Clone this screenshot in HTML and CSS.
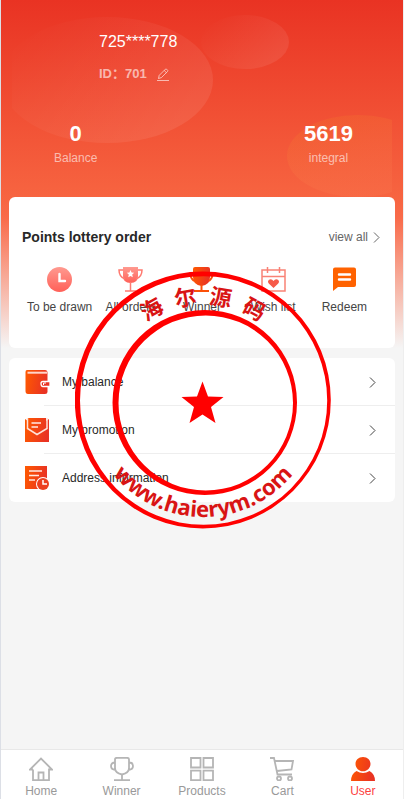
FILE: index.html
```html
<!DOCTYPE html>
<html lang="en">
<head>
    <meta charset="UTF-8">
    <meta name="viewport" content="width=device-width, initial-scale=1.0">
    <title>User</title>
    <link rel="stylesheet" href="styles.css">
</head>
<body>
    <!-- Shared gradients for the icons -->
    <svg class="defs" width="0" height="0" aria-hidden="true">
        <defs>
            <linearGradient id="orange" x1="0" y1="0" x2="1" y2="0.2">
                <stop offset="0" stop-color="#ff5a00"/>
                <stop offset="1" stop-color="#e93323"/>
            </linearGradient>
            <linearGradient id="pink" x1="0" y1="0" x2="0" y2="1">
                <stop offset="0" stop-color="#ff9a90"/>
                <stop offset="1" stop-color="#ff6058"/>
            </linearGradient>
        </defs>
    </svg>

    <div class="page">
        <main class="content">
            <header class="header">
                <svg class="bubbles" viewBox="12 0 380 200" preserveAspectRatio="none" aria-hidden="true">
                    <defs>
                        <linearGradient id="glow" x1="0" y1="0" x2="1" y2="0.5">
                            <stop offset="0.1" stop-color="#fff" stop-opacity="0"/>
                            <stop offset="1" stop-color="#fff" stop-opacity="0.08"/>
                        </linearGradient>
                        <linearGradient id="amber" x1="0" y1="0" x2="0.5" y2="1">
                            <stop offset="0" stop-color="#f07020" stop-opacity="0.3"/>
                            <stop offset="1" stop-color="#ff9060" stop-opacity="0.12"/>
                        </linearGradient>
                    </defs>
                    <ellipse cx="107" cy="80" rx="106" ry="63" fill="url(#glow)"/>
                    <ellipse cx="245" cy="42" rx="44" ry="27" fill="url(#glow)"/>
                    <ellipse cx="358" cy="156" rx="71" ry="41" fill="url(#amber)"/>
                </svg>
                <div class="profile">
                    <h1>725****778</h1>
                    <div class="user-id">
                        <span>ID：701</span>
                        <button type="button" aria-label="Edit profile">
                            <svg width="12" height="13" viewBox="0 0 12 13" fill="none" stroke="currentColor">
                                <path d="M1.5 10.5L2.2 7.4L8.4 1.2Q9 .6 9.6 1.2L10.6 2.2Q11.2 2.8 10.6 3.4L4.4 9.6ZM7.2 2.5L9.4 4.7M0 12.5H12"/>
                            </svg>
                        </button>
                    </div>
                </div>
                <div class="totals">
                    <div class="total"><strong>0</strong><span>Balance</span></div>
                    <div class="total"><strong>5619</strong><span>integral</span></div>
                </div>
            </header>

            <section class="card orders">
                <div class="card-head">
                    <h2>Points lottery order</h2>
                    <a href="#all">view all
                        <svg width="7" height="11" viewBox="0 0 7 11" fill="none" stroke="currentColor"><path d="M1 .5L6 5.5L1 10.5"/></svg>
                    </a>
                </div>
                <nav class="order-links">
                    <a href="#drawn">
                        <svg width="25" height="25" viewBox="0 0 25 25"><circle cx="12.5" cy="12.5" r="12.5" fill="url(#pink)"/><path d="M12.5 7V14H18" fill="none" stroke="#fff" stroke-width="2.4" stroke-linecap="round"/></svg>
                        <span>To be drawn</span>
                    </a>
                    <a href="#orders">
                        <svg width="25" height="25" viewBox="0 0 25 25"><path d="M5 0H20V9Q20 16 12.5 16T5 9Z" fill="url(#pink)"/><path d="M5 3H1Q1 10 7 12M20 3H24Q24 10 18 12M12.5 15V24M7 24H18" fill="none" stroke="#ff7a70" stroke-width="1.5"/><path d="M12.5 3L13.6 5.5L16.2 5.8L14.2 7.6L14.8 10.2L12.5 8.9L10.2 10.2L10.8 7.6L8.8 5.8L11.4 5.5Z" fill="#fff"/></svg>
                        <span>All orders</span>
                    </a>
                    <a href="#winner">
                        <svg width="25" height="25" viewBox="0 0 25 25"><path d="M4 2Q4 0 6 0H19Q21 0 21 2V10Q21 18 12.5 19Q4 18 4 10Z" fill="url(#orange)"/><path d="M4 6H1.5Q1 11 5 14M21 6H23.5Q24 11 20 14M12.5 18V24M5 24H20" fill="none" stroke="#fb5008" stroke-width="2"/></svg>
                        <span>Winner</span>
                    </a>
                    <a href="#wish">
                        <svg width="25" height="25" viewBox="0 0 25 25"><path d="M6.5 3H1V24H24V3H18.5M9 3H16M1 9.5H24M6.5 0V6M18.5 0V6M9 3H4M16 3H21" fill="none" stroke="#f98276" stroke-width="1.5"/><path d="M12.5 21L8 16.8Q6 14.5 8 12.8Q10.5 11.2 12.5 14Q14.5 11.2 17 12.8Q19 14.5 17 16.8Z" fill="#f65a49"/></svg>
                        <span>Wish list</span>
                    </a>
                    <a href="#redeem">
                        <svg width="25" height="25" viewBox="0 0 25 25"><path d="M3 0.5H22Q24 .5 24 2.5V18Q24 20 22 20H6L1 24V2.5Q1 .5 3 .5Z" fill="#ff6200"/><path d="M7 7.5H18M7 12.5H18" stroke="#fff" stroke-width="2.4" stroke-linecap="round"/></svg>
                        <span>Redeem</span>
                    </a>
                </nav>
            </section>

            <nav class="card menu">
                <a href="#balance">
                    <svg width="25" height="25" viewBox="0 0 25 25"><path d="M2 0H20Q22.5 0 22.5 3V22Q22.5 24 20 24H3Q.5 24 .5 21V2Q.5 0 2 0Z" fill="url(#orange)"/><path d="M2.5 2.7H22" stroke="#ffd5ca" stroke-width="2"/><path d="M25 11.5H18Q16 11.5 16 13.5Q16 16.5 18 16.5H25Z" fill="#e93323" stroke="#fff" stroke-width="1.3"/><path d="M21 13H18.5V15" fill="none" stroke="#fff"/></svg>
                    <span>My balance</span>
                    <svg class="arrow" width="7" height="11" viewBox="0 0 7 11"><path d="M1 .5L6 5.5L1 10.5"/></svg>
                </a>
                <a href="#promotion">
                    <svg width="25" height="25" viewBox="0 0 25 25"><path d="M3 0H21V3L24 1V24H0V1L3 3Z" fill="url(#orange)"/><path d="M2.5 0V10.5L12 16.5L22 10.5V0" fill="none" stroke="#ffe1d8" stroke-width="1.5"/><path d="M6.5 5H16M6.5 9H13" stroke="#ffe9e3" stroke-width="1.5"/></svg>
                    <span>My promotion</span>
                    <svg class="arrow" width="7" height="11" viewBox="0 0 7 11"><path d="M1 .5L6 5.5L1 10.5"/></svg>
                </a>
                <a href="#address">
                    <svg width="25" height="25" viewBox="0 0 25 25"><path d="M0 0H22V23H0Z" fill="url(#orange)"/><path d="M4 5H17M4 9.5H14M4 14H10" stroke="#ffe9e3" stroke-width="1.5"/><circle cx="18" cy="18" r="7" fill="#fff"/><circle cx="18" cy="18" r="6" fill="#ec4020"/><path d="M18 14V18H22" fill="none" stroke="#fff" stroke-width="1.5"/></svg>
                    <span>Address information</span>
                    <svg class="arrow" width="7" height="11" viewBox="0 0 7 11"><path d="M1 .5L6 5.5L1 10.5"/></svg>
                </a>
            </nav>
        </main>

        <nav class="tabbar">
            <a href="#home">
                <svg viewBox="0 0 24 24"><path d="M4 12.5V23.2H20V12.5H23L12 1.5L1 12.5H4M9.5 23V15.5H14.5V23"/></svg>
                <span>Home</span>
            </a>
            <a href="#winners">
                <svg viewBox="0 0 24 24"><path d="M5 2.5Q5 .8 7 .8H17Q19 .8 19 2.5V11Q19 16 12 17.5Q5 16 5 11ZM5 5.5Q1 5.5 1 9Q1 12.5 5.5 13M19 5.5Q23 5.5 23 9Q23 12.5 18.5 13M12 18V23M4 23.2H20"/></svg>
                <span>Winner</span>
            </a>
            <a href="#products">
                <svg viewBox="0 0 24 24"><path d="M1 1H10.5V10.5H1ZM13.5 1H23V10.5H13.5ZM1 13.7H10.5V23.2H1ZM13.5 13.7H23V23.2H13.5Z"/></svg>
                <span>Products</span>
            </a>
            <a href="#cart">
                <svg viewBox="0 0 24 24"><path d="M0 1H4L7.5 17.5H22M5 4H23L21.5 12.5L7 14"/><circle cx="9" cy="21.5" r="2"/><circle cx="20" cy="21.5" r="2"/></svg>
                <span>Cart</span>
            </a>
            <a href="#user" class="active">
                <svg viewBox="0 0 24 24"><path d="M12 0C16.5 0 19.5 3 19.5 7S16 14.3 12 14.3S4.5 11 4.5 7S7.5 0 12 0ZM5.5 14Q12 18 18.5 14Q24 17 24 24H0Q0 17 5.5 14Z"/></svg>
                <span>User</span>
            </a>
        </nav>

        <!-- Site seal over the page -->
        <svg class="seal" width="256" height="258" viewBox="75 271 256 258">
            <defs>
                <path id="arc-top" d="M105 402A98 98 0 0 1 301 402"/>
                <path id="arc-bottom" d="M87 401A116 116 0 0 0 319 401"/>
            </defs>
            <g fill="#f00" fill-rule="evenodd">
                <path d="M74.8 400A128 128.5 0 0 1 330.8 400A128 128.5 0 0 1 74.8 400ZM80 400.5A123.6 124.3 0 0 0 327.2 400.5A123.6 124.3 0 0 0 80 400.5Z"/>
                <path d="M112.5 402.5A92.2 92.5 0 0 1 297 402.5A92.2 92.5 0 0 1 112.5 402.5ZM118.5 403A87.2 87.5 0 0 0 293 403A87.2 87.5 0 0 0 118.5 403Z"/>
                <path d="M202.5 381.5L208 396.5L223.5 397L211 407L215.5 423L202.5 414.5L189.5 423L194 407L181.5 397L197 396.5Z"/>
            </g>
            <text class="seal-name"><textPath href="#arc-top" startOffset="50%">海&#8194;尔&#8194;源&#8194;码</textPath></text>
            <text class="seal-site"><textPath href="#arc-bottom" startOffset="50%">www.haierym.com</textPath></text>
        </svg>
    </div>
</body>
</html>
```

FILE: styles.css
```css
* {
    box-sizing: border-box;
}
body {
    margin: 0;
    background-color: #f5f5f5;
    color: #282828;
    font-family: "Liberation Sans", "Noto Sans CJK SC", sans-serif;
    font-size: 12px;
    line-height: 16px;
}
h1, h2 {
    margin: 0;
}
a {
    color: inherit;
    text-decoration: none;
}
svg {
    display: block;
    flex-shrink: 0;
}
.defs {
    position: absolute;
}
.page {
    position: relative;
    min-height: 100vh;
    display: flex;
    flex-direction: column;
    border-left: 1px solid #dcdfe6;
    border-right: 1px solid #eee;
}
.content {
    flex: 1;
    padding: 0 8px 10px;
    background: linear-gradient(#e93323 0, #f76541 200px, #f96b4a 218px, #f5f5f5 348px);
}

/* Header */
.header {
    position: relative;
    margin: 0 -8px;
    padding-top: 32px;
    color: #fff;
}
.bubbles {
    position: absolute;
    top: 0;
    left: 11px;
    width: calc(100% - 22px);
    height: 200px;
}
.profile {
    position: relative;
    padding-left: 98px;
}
.profile h1 {
    font-size: 16px;
    font-weight: normal;
    line-height: 20px;
}
.user-id {
    display: flex;
    align-items: center;
    gap: 10px;
    margin-top: 12px;
    font-size: 13px;
    font-weight: bold;
    line-height: 20px;
    color: rgba(255, 255, 255, 0.6);
}
.user-id button {
    padding: 0;
    border: none;
    background: none;
    color: inherit;
    cursor: pointer;
}
.totals {
    position: relative;
    display: flex;
    justify-content: space-between;
    margin-top: 37px;
    padding: 0 50px 31px 53px;
}
.total {
    display: flex;
    flex-direction: column;
    align-items: center;
    gap: 4px;
}
.total strong {
    font-size: 22px;
    line-height: 25px;
}
.total span {
    color: rgba(255, 255, 255, 0.6);
}

/* Cards */
.card {
    background-color: #fff;
    border-radius: 6px;
}
.orders {
    padding: 30px 15px 33px 13px;
}
.card-head {
    display: flex;
    justify-content: space-between;
    align-items: center;
}
.card-head h2 {
    font-size: 14px;
    line-height: 20px;
}
.card-head a {
    display: flex;
    align-items: center;
    gap: 5px;
    color: #666;
}
.order-links {
    display: grid;
    grid-template-columns: repeat(5, 1fr);
    margin: 20px 0 0 2px;
}
.order-links a {
    display: flex;
    flex-direction: column;
    align-items: center;
    gap: 7px;
    color: #454545;
    white-space: nowrap;
}
.menu {
    margin-top: 10px;
}
.menu a {
    display: flex;
    align-items: center;
    height: 48px;
    padding: 0 19px 0 16px;
    background: linear-gradient(#eee, #eee) no-repeat 35px 100% / 100% 1px;
}
.menu a:last-child {
    background: none;
}
.menu span {
    flex: 1;
    margin-left: 12px;
}
.arrow {
    fill: none;
    stroke: #444;
}

/* Bottom bar */
.tabbar {
    position: sticky;
    bottom: 0;
    display: grid;
    grid-template-columns: repeat(5, 1fr);
    padding-top: 7px;
    background-color: #fff;
    border-top: 1px solid #e8e8e8;
}
.tabbar a {
    display: flex;
    flex-direction: column;
    align-items: center;
    gap: 2px;
    color: #999;
}
.tabbar svg {
    width: 24px;
    height: 24px;
    fill: none;
    stroke: #b5b5b5;
    stroke-width: 1.8;
}
.tabbar .active {
    color: #fc4141;
}
.tabbar .active svg {
    fill: url(#orange);
    stroke: none;
}

/* Seal */
.seal {
    position: absolute;
    top: 271px;
    left: 50%;
    margin-left: -127px;
    pointer-events: none;
}
.seal text {
    fill: #d91414;
    font-weight: bold;
    text-anchor: middle;
}
.seal-name {
    font-family: "Noto Sans CJK SC", sans-serif;
    font-size: 22px;
}
.seal-site {
    font-family: "Noto Sans", sans-serif;
    font-size: 22px;
}
```
